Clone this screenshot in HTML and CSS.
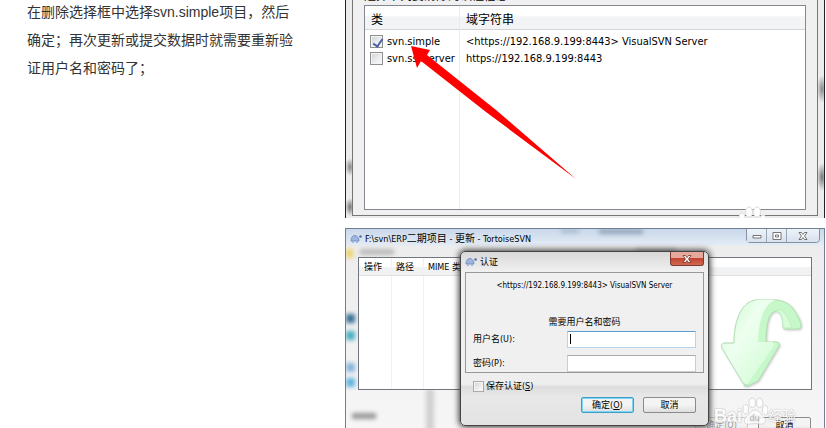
FILE: index.html
```
<!DOCTYPE html>
<html lang="zh-CN">

<head>
    <meta charset="UTF-8">
    <meta name="viewport" content="width=device-width, initial-scale=1.0">
    <title>清除SVN用户名和密码</title>
    <link rel="stylesheet" href="styles.css">
</head>

<body>
    <main class="page">
        <p class="step">在删除选择框中选择svn.simple项目，然后确定；再次更新或提交数据时就需要重新验证用户名和密码了；</p>

        <div class="figures">
            <section class="shot shot-clear">
                <div class="clear-dialog">
                    <p class="clear-caption">选择下列要清除的认证信息</p>
                    <table class="auth-list">
                        <thead>
                            <tr>
                                <th class="col-type">类</th>
                                <th>域字符串</th>
                            </tr>
                        </thead>
                        <tbody>
                            <tr>
                                <td><label class="check-label"><input type="checkbox" class="check" checked>svn.simple</label></td>
                                <td>&lt;https://192.168.9.199:8443&gt; VisualSVN Server</td>
                            </tr>
                            <tr>
                                <td><label class="check-label"><input type="checkbox" class="check">svn.ssl.server</label></td>
                                <td>https://192.168.9.199:8443</td>
                            </tr>
                            <tr class="filler">
                                <td></td>
                                <td></td>
                            </tr>
                        </tbody>
                    </table>
                </div>
                <svg class="red-arrow" width="168" height="134" viewBox="0 0 168 134">
                    <path fill="#f00" d="M1 0L20 4L17 9L86 64L166 133L76 66L11 15L7 22Z" />
                </svg>
                <svg class="paw-top" width="28" height="12" viewBox="0 0 28 12">
                    <g fill="#fff" stroke="#ddd" stroke-width="1">
                        <ellipse cx="11" cy="6" rx="3.500" ry="5" />
                        <ellipse cx="19" cy="6" rx="3.500" ry="5" />
                        <ellipse cx="4" cy="12" rx="3" ry="5" />
                        <ellipse cx="25" cy="13" rx="3" ry="4" />
                    </g>
                </svg>
            </section>

            <section class="shot shot-update">
                <div class="smudges">
                    <i class="smudge s1"></i><i class="smudge s2"></i><i class="smudge s3"></i>
                    <i class="smudge s4"></i><i class="smudge s5"></i><i class="smudge s6"></i>
                    <i class="smudge s7"></i><i class="smudge s8"></i><i class="smudge s9"></i>
                    <i class="smudge s10"></i><i class="smudge s11"></i>
                </div>
                <header class="titlebar">
                    <svg class="turtle" width="12" height="10" viewBox="0 0 12 10">
                        <path fill="#9fb6de" stroke="#6684b8" stroke-width="0.800" d="M1 7C1 3 3 1.500 5 1.500S9 4 9 7Z" />
                        <path fill="#9fb8dc" d="M2 7h2v2H2zM6 7h2v2H6z" />
                        <circle cx="10.500" cy="2.500" r="1.300" fill="#4f6ea8" />
                    </svg>
                    <h2 class="title">F:\svn\ERP<span class="cjk">二期项目</span> - <span class="cjk">更新</span> - TortoiseSVN</h2>
                    <div class="window-buttons">
                        <button type="button" aria-label="最小化"><svg width="10" height="8" viewBox="0 0 10 8"><path fill="#fff" stroke="#555" stroke-width="0.800" d="M1 3.500h8v2.500H1z" /></svg></button>
                        <button type="button" aria-label="最大化"><svg width="10" height="8" viewBox="0 0 10 8"><path fill="#fff" stroke="#555" stroke-width="0.800" d="M1 .500h8v7H1zM3.500 3h3v2h-3z" /></svg></button>
                        <button type="button" class="wide" aria-label="关闭"><svg width="10" height="8" viewBox="0 0 10 8"><path fill="#fff" stroke="#555" stroke-width="0.800" d="M1 .500h2.500L5 2.500L6.500 .500H9L6.500 4L9 7.500H6.500L5 5.500L3.500 7.500H1L3.500 4Z" /></svg></button>
                    </div>
                </header>
                <div class="update-list">
                    <div class="update-cols">
                        <span>操作</span>
                        <span>路径</span>
                        <span>MIME 类型</span>
                    </div>
                    <svg class="green-arrow" width="84" height="92" viewBox="0 0 84 92">
                        <defs>
                            <linearGradient id="leaf" x1="0" y1="0" x2="1" y2="1">
                                <stop offset="0" stop-color="#c8f9c9" />
                                <stop offset="0.400" stop-color="#eefff0" />
                                <stop offset="1" stop-color="#cdfbd0" />
                            </linearGradient>
                        </defs>
                        <g stroke="#b0dfb4" stroke-width="1" stroke-linejoin="round">
                            <path fill="#c6f8c9" d="M37 3H58C65 4 71 7 75 13C79 19 82 25 82 29Q82 32 79 32H66Q64 32 64 30C64 20 61 14 57 14C49 15 47 30 47 45H58Q61 46 60 49L39 84L29 89H25Z" />
                            <path fill="url(#leaf)" stroke="none" d="M15 46C15 26 21 5 37 3H56C46 7 40 20 39 45H53Q56 46 55 49L29 86Q27 89 24 86L3 51Q1 47 5 47Z" />
                            <path fill="none" d="M37 3C21 5 15 26 15 46H5Q1 47 3 51L24 86Q26 88 29 88" />
                            <path fill="#d6fcd8" stroke="#c0edc3" d="M57 14C62 10 67 15 73 31H66Q64 32 64 30C64 20 61 14 57 14Z" />
                        </g>
                    </svg>
                </div>
                <footer class="update-footer">
                    <button type="button" class="btn faint">确定(O)</button>
                    <button type="button" class="btn">取消</button>
                </footer>

                <form class="auth-dialog">
                    <div class="auth-title">
                        <svg class="turtle" width="12" height="10" viewBox="0 0 12 10">
                            <path fill="#9fb6de" stroke="#6684b8" stroke-width="0.800" d="M1 7C1 3 3 1.500 5 1.500S9 4 9 7Z" />
                            <path fill="#9fb8dc" d="M2 7h2v2H2zM6 7h2v2H6z" />
                            <circle cx="10.500" cy="2.500" r="1.300" fill="#4f6ea8" />
                        </svg>
                        <h3 class="title">认证</h3>
                        <button type="button" class="close" aria-label="关闭"><svg width="10" height="8" viewBox="0 0 10 8"><path fill="#fff" stroke="#6b3530" stroke-width="0.800" d="M1 .500h2.500L5 2.500L6.500 .500H9L6.500 4L9 7.500H6.500L5 5.500L3.500 7.500H1L3.500 4Z" /></svg></button>
                    </div>
                    <div class="auth-panel">
                        <p class="realm">&lt;https://192.168.9.199:8443&gt; VisualSVN Server</p>
                        <p class="prompt">需要用户名和密码</p>
                        <div class="field">
                            <label for="user">用户名(U):</label>
                            <div class="caret-box"><input type="text" id="user" class="focused"></div>
                        </div>
                        <div class="field">
                            <label for="pass">密码(P):</label>
                            <input type="password" id="pass">
                        </div>
                    </div>
                    <div class="auth-bottom">
                        <label class="save"><input type="checkbox" class="check small"><span>保存认证(<u>S</u>)</span></label>
                        <div class="auth-buttons">
                            <button type="button" class="btn default">确定(<u>O</u>)</button>
                            <button type="button" class="btn">取消</button>
                        </div>
                    </div>
                </form>

                <div class="watermark">
                    <span class="wm-latin">Bai</span>
                    <svg width="26" height="30" viewBox="0 0 28 32">
                        <g fill="#fff" stroke="#ccc" stroke-width="1">
                            <ellipse cx="11" cy="6" rx="3.500" ry="5" />
                            <ellipse cx="19" cy="6" rx="3.500" ry="5" />
                            <ellipse cx="4" cy="13" rx="3" ry="5" />
                            <ellipse cx="25" cy="14" rx="3" ry="5" />
                            <path d="M14 14C19 14 20 19 24 22C27 26 24 30 20 29Q14 28 8 29C3 30 1 26 4 22C8 19 9 14 14 14Z" />
                        </g>
                        <text x="8" y="26" class="wm-du">du</text>
                    </svg>
                    <span class="wm-cn">经验</span>
                </div>
            </section>
        </div>
    </main>
</body>

</html>
```
FILE: styles.css
```
* {
    box-sizing: border-box;
    margin: 0;
    padding: 0;
}

body {
    background-color: #fff;
    color: #333;
    font-family: "Liberation Sans", "Noto Sans CJK SC", sans-serif;
    overflow: hidden;
}

.page {
    display: grid;
    grid-template-columns: 42fr 58fr;
    height: 100vh;
    overflow: hidden;
}

.step {
    margin-top: -2px;
    padding: 0 48px 0 27px;
    font-size: 14px;
    line-height: 28px;
}

.figures {
    display: flex;
    flex-direction: column;
    gap: 10px;
    margin: -15px 1px 0 -2px;
    color: #000;
    font-family: "DejaVu Sans Condensed", "Noto Sans CJK SC", sans-serif;
}

.shot {
    position: relative;
    overflow: hidden;
}

/* first window: list of saved credentials */
.shot-clear {
    padding: 0 6px 2px;
    border: solid #222;
    border-width: 0 1px;
    background:
        radial-gradient(ellipse 5px 9px at 4px 182px, #888, transparent),
        radial-gradient(ellipse 5px 9px at 4px 222px, #777, transparent),
        radial-gradient(ellipse 5px 14px at 476px 104px, #888, transparent),
        radial-gradient(ellipse 5px 14px at 476px 192px, #777, transparent),
        #ececec;
}

.clear-dialog {
    padding: 0 11px 5px;
    border: solid #777;
    border-width: 0 1px 1px;
    background-color: #f0f0f0;
}

.clear-caption {
    height: 20px;
    font-size: 12px;
    line-height: 22px;
}

.auth-list {
    width: 100%;
    border: 1px solid #828790;
    border-spacing: 0;
    background-color: #fff;
    font-size: 11px;
    table-layout: fixed;
}

.auth-list th {
    height: 24px;
    padding: 4px 0 0 6px;
    border-bottom: 1px solid #d5d5d5;
    background: linear-gradient(#fff 45%, #f3f4f6 46%);
    font-size: 12px;
    font-weight: normal;
    line-height: 16px;
    text-align: left;
}

.auth-list .col-type {
    width: 95px;
}

.auth-list td {
    height: 17px;
    padding-left: 6px;
    line-height: 17px;
    white-space: nowrap;
}

.auth-list th:first-child,
.auth-list td:first-child {
    border-right: 1px solid #e3edf7;
}

.auth-list tbody tr:first-child td {
    height: 20px;
    padding-top: 3px;
}

.auth-list .filler td {
    height: 142px;
}

.check-label {
    display: flex;
    align-items: center;
    gap: 4px;
    margin-left: -1px;
}

.check {
    position: relative;
    flex: none;
    width: 13px;
    height: 13px;
    appearance: none;
    border: 1px solid #8e8f8f;
    background: linear-gradient(135deg, #d0d4d8, #fff);
    box-shadow: inset 0 0 0 1px #f4f4f4;
}

.check:checked::after {
    content: "";
    position: absolute;
    left: 4px;
    top: 1px;
    width: 4px;
    height: 8px;
    border: solid #4a62a5;
    border-width: 0 2px 2px 0;
    transform: rotate(35deg);
}

.check.small {
    width: 11px;
    height: 11px;
    border-color: #aaa;
}

.red-arrow {
    position: absolute;
    left: 64px;
    top: 61px;
}

.paw-top {
    position: absolute;
    right: 58px;
    bottom: 0;
}

/* second window: update dialog with the login prompt */
.shot-update {
    padding: 0 12px;
    border: solid #6f7f91;
    border-width: 1px 1px 0;
    background: linear-gradient(#c9d8ea, #e3ebf5 16px, #ededee 17px, #f6f6f6);
    font-size: 9px;
}

.smudge {
    position: absolute;
    width: 9px;
    height: 9px;
    filter: blur(2px);
    background-color: #888;
}

.s1 { left: 0; top: 20px; width: 7px; background-color: #ecd36c; }
.s2 { left: 14px; top: 20px; width: 34px; height: 6px; background-color: #bbb; }
.s3 { left: 0; top: 85px; background-color: #386f95; }
.s4 { left: 0; top: 102px; background-color: #48aec0; }
.s5 { left: 0; top: 134px; background-color: #86b5dc; }
.s6 { left: 0; top: 149px; background-color: #60b4df; }
.s7 { left: 6px; top: 184px; width: 24px; height: 6px; background-color: #999; }
.s8 { left: 80px; top: 160px; width: 8px; height: 50px; background-color: #d0d0d0; }
.s9 { left: 215px; top: 0; width: 18px; height: 4px; background-color: #a8bacd; }
.s10 { left: 290px; top: 19px; width: 40px; height: 6px; background-color: #c2c2c2; }
.s11 { left: 253px; top: 0; width: 44px; height: 5px; background-color: #93a6bc; }

.titlebar {
    position: relative;
    display: flex;
    align-items: center;
    gap: 3px;
    height: 28px;
    margin: 0 -8px;
    padding-bottom: 8px;
}

.title {
    font-size: 9px;
    font-weight: normal;
    line-height: 14px;
    white-space: nowrap;
}

.cjk {
    font-size: 10px;
}

.turtle {
    flex: none;
}

.window-buttons {
    display: flex;
    align-self: flex-start;
    margin: -1px 0 0 auto;
    border: 1px solid #8592a3;
    border-radius: 0 0 4px 4px;
}

.window-buttons button {
    display: grid;
    place-items: center;
    width: 20px;
    height: 13px;
    border: 0;
    border-right: 1px solid #9aa7b8;
    background: linear-gradient(#eef3f9, #d7e1ed);
}

.window-buttons .wide {
    width: 32px;
    border-right: 0;
    border-radius: 0 0 4px 0;
}

.update-list {
    position: relative;
    height: 133px;
    border: 1px solid #71757e;
    background:
        linear-gradient(#eaf2fa, #eaf2fa) 32px 0 / 1px 100% no-repeat,
        linear-gradient(#eaf2fa, #eaf2fa) 64px 0 / 1px 100% no-repeat,
        #fff;
}

.update-cols {
    display: grid;
    grid-template-columns: 32px 32px 1fr;
    height: 18px;
    padding-left: 5px;
    border-bottom: 1px solid #e0e0e0;
    background: linear-gradient(transparent 50%, #f1f2f4 51%);
    line-height: 18px;
}

.green-arrow {
    position: absolute;
    right: 8px;
    bottom: 0;
    filter: drop-shadow(1px 1px 1px #ccc);
}

.update-footer {
    display: flex;
    justify-content: flex-end;
    gap: 10px;
    padding: 27px 1px 0 0;
}

.btn {
    width: 53px;
    height: 16px;
    border: 1px solid #8b8b8b;
    border-radius: 2px;
    background: linear-gradient(#f4f4f4 50%, #dedede);
    color: #000;
    font-family: inherit;
    font-size: 9px;
    line-height: 12px;
}

.btn.faint {
    color: #999;
    border-color: #ccc;
}

.btn.default {
    border-color: #3c9fc8;
    box-shadow: inset 0 0 0 1px #7fd6f2;
}

.auth-dialog {
    position: absolute;
    left: 114px;
    top: 22px;
    width: 249px;
    padding: 0 4px 12px;
    border: 1px solid #444;
    border-radius: 5px;
    background: linear-gradient(#d8d8d8, #f1f1f1 20px, #eee 132px, #ddd 135px, #e8e8e8 145px, #e3e3e3);
    box-shadow: 0 0 6px 1px #333;
}

.auth-title {
    display: flex;
    align-items: center;
    gap: 3px;
    height: 20px;
}

.close {
    display: grid;
    place-items: center;
    align-self: flex-start;
    width: 34px;
    height: 14px;
    margin-left: auto;
    border: 1px solid #7a3a35;
    border-top: 0;
    border-radius: 0 0 3px 3px;
    background: linear-gradient(#e7a89c 45%, #c04532 50%, #d4694f);
}

.auth-panel {
    height: 101px;
    padding: 6px 7px 0;
    border: 1px solid #999;
    background-color: #f0f0f0;
    overflow: hidden;
}

.realm {
    height: 36px;
    font-size: 8px;
    line-height: 14px;
    text-align: center;
}

.prompt {
    height: 16px;
    line-height: 14px;
    text-align: center;
}

.field {
    display: grid;
    grid-template-columns: 94px 1fr;
    height: 24px;
    line-height: 17px;
}

.field input {
    width: 100%;
    height: 17px;
    border: 1px solid #ccc;
    border-top-color: #aaa;
    background-color: #fff;
    outline: none;
}

.field .focused {
    border-color: #b5d5ee;
    border-top-color: #5c9dd0;
}

.caret-box {
    position: relative;
}

.caret-box::after {
    content: "";
    position: absolute;
    left: 3px;
    top: 3px;
    width: 1px;
    height: 10px;
    background-color: #000;
}

.auth-bottom {
    padding: 6px 8px 0;
}

.save {
    display: flex;
    align-items: center;
    gap: 2px;
    line-height: 14px;
}

.auth-buttons {
    display: flex;
    justify-content: flex-end;
    gap: 9px;
    padding-top: 4px;
}

.watermark {
    position: absolute;
    right: 28px;
    top: 168px;
    display: flex;
    align-items: flex-end;
    opacity: 0.8;
    color: #fff;
    font-size: 18px;
    line-height: 22px;
    text-shadow: 0 0 2px #888;
}

.wm-latin {
    font-family: "Liberation Sans", sans-serif;
    font-weight: bold;
}

.wm-cn {
    font-size: 14px;
}

.wm-du {
    fill: #bbb;
    font-family: "Liberation Sans", sans-serif;
    font-size: 10px;
}
```
